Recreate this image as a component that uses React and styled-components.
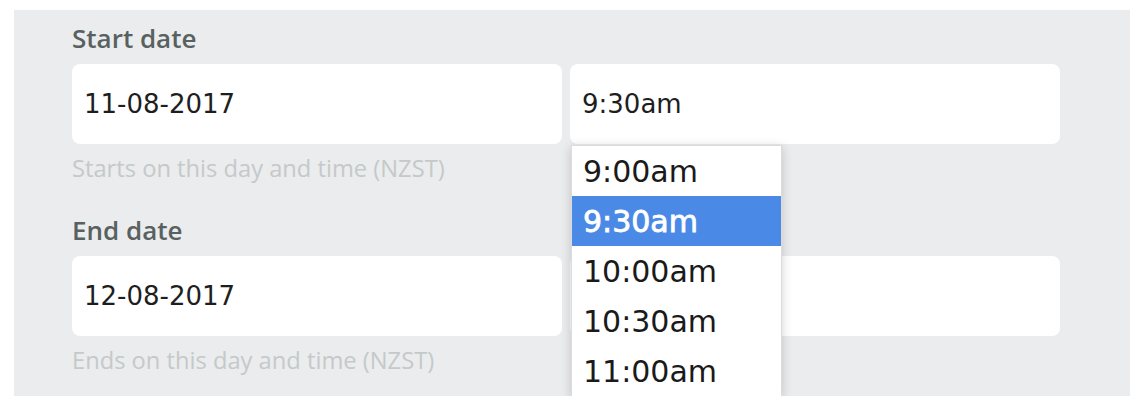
import React from "react"
import styled, { createGlobalStyle } from "styled-components"

const GlobalStyle = createGlobalStyle`
  html, body {
    margin: 0;
    padding: 0;
    background: #ffffff;
  }
`

/** PAGE + PANEL **/
const Page = styled.div`
  width: 1140px;
  height: 404px;
  padding: 10px 10px 8px 14px;
  box-sizing: border-box;
  background: #ffffff;
`

const Panel = styled.div`
  width: 1116px;
  height: 386px;
  box-sizing: border-box;
  padding: 13px 70px 0 58px;
  background: #ebeced;
  overflow: hidden;
`

/** FIELD GROUP **/
const Group = styled.div`
  margin-top: ${props => props.spaced ? 32 : 0}px;
`

const Label = styled.div`
  font-family: "Open Sans", sans-serif;
  font-weight: 600;
  font-size: 26px;
  line-height: 30px;
  color: #58615f;
  margin-bottom: 11px;
`

const Row = styled.div`
  display: grid;
  grid-template-columns: 490px 490px;
  column-gap: 8px;
`

const Field = styled.div`
  position: relative;
`

const Input = styled.input`
  display: block;
  width: 100%;
  height: 80px;
  box-sizing: border-box;
  border: none;
  outline: none;
  border-radius: 8px;
  background: #ffffff;
  padding: 0 12px;
  font-family: "DejaVu Sans", sans-serif;
  font-size: 26px;
  color: #1e1e1e;
`

const Helper = styled.div`
  margin-top: 9px;
  font-family: "Open Sans", sans-serif;
  font-size: 23.7px;
  line-height: 30px;
  color: #c4c9ca;
`

/** TIME DROPDOWN **/
const Menu = styled.ul`
  position: absolute;
  top: 81px;
  left: 1px;
  width: 209px;
  margin: 0;
  padding: 0;
  list-style: none;
  background: #ffffff;
  border: 1px solid #dcdcdc;
  box-shadow: 0 2px 10px rgba(0, 0, 0, 0.18);
  z-index: 2;
`

const Option = styled.li`
  height: 50px;
  display: flex;
  align-items: center;
  padding-left: 11px;
  font-family: "DejaVu Sans", sans-serif;
  font-size: 30px;
  color: ${props => props.active ? "#ffffff" : "#1a1a1a"};
  background: ${props => props.active ? "#4a89e6" : "transparent"};
  -webkit-text-stroke: ${props => props.active ? "0.8px #ffffff" : "0"};
`

const TIMES = ["9:00am", "9:30am", "10:00am", "10:30am", "11:00am"]

const DateField = ({ label, date, time, helper, spaced, open }) => (
  <Group spaced={spaced}>
    <Label>{label}</Label>
    <Row>
      <Field>
        <Input readOnly value={date} />
      </Field>
      <Field>
        <Input readOnly value={time} />
        {open ? (
          <Menu>
            {TIMES.map(t => (
              <Option key={t} active={t === time}>{t}</Option>
            ))}
          </Menu>
        ) : null}
      </Field>
    </Row>
    <Helper>{helper}</Helper>
  </Group>
)

const App = () => (
  <Page>
    <GlobalStyle />
    <Panel>
      <DateField
        label="Start date"
        date="11-08-2017"
        time="9:30am"
        helper="Starts on this day and time (NZST)"
        open
      />
      <DateField
        spaced
        label="End date"
        date="12-08-2017"
        time="10:30am"
        helper="Ends on this day and time (NZST)"
      />
    </Panel>
  </Page>
)

export default App
